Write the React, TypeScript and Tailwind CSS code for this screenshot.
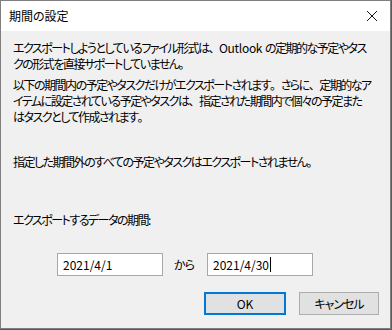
import React from 'react'

const jp = "font-['Noto_Sans_CJK_JP','Noto_Sans',sans-serif] [font-feature-settings:'palt']"

// full-width punctuation, as the Windows dialog font draws it
const P = ({ c }: { c: string }) => <span className="[font-feature-settings:normal]">{c}</span>

export default function App() {
  return (
    <div className="w-[392px] h-[330px] bg-[#5a5a5a]">
      <div className={`w-[391px] h-[329px] border border-[#7f7f7f] bg-[#f0f0f0] flex flex-col text-black text-[12px] ${jp}`}>
        <div className="h-[30px] bg-white flex items-center justify-between pl-[8px] pr-[10px] shrink-0">
          <span className="text-[12px] leading-4">期間の設定</span>
          <svg width="12" height="12" viewBox="0 0 12 12" className="mr-[2px]">
            <path d="M1 1 L11 11 M11 1 L1 11" stroke="#111" strokeWidth="1" fill="none" />
          </svg>
        </div>
        <div className="flex flex-col pl-[12px] pr-[10px] pt-[9px] leading-4 whitespace-nowrap">
          <div className="tracking-[-1.5px]">
            <p>
              エクスポートしようとしているファイル形式は<P c="、" /><span className="tracking-[-0.3px]">Outlook</span><span className="tracking-normal"> </span>の定期的な予定やタス
              <br />
              クの形式を直接サポートしていません<P c="。" />
            </p>
            <p className="mt-[5px]">
              以下の期間内の予定やタスクだけがエクスポートされます<P c="。" />さらに<P c="、" />定期的なア
              <br />
              イテムに設定されている予定やタスクは<P c="、" />指定された期間内で個々の予定また
              <br />
              はタスクとして作成されます<P c="。" />
            </p>
            <p className="mt-[29px]">指定した期間外のすべての予定やタスクはエクスポートされません<P c="。" /></p>
            <p className="mt-[42px]">エクスポートするデータの期間:</p>
          </div>
          <div className="mt-[25px] flex items-center pl-[44px]">
            <div className="w-[106px] h-[23px] bg-white border border-[#a8a8a8] flex items-center pl-[5px]">2021/4/1</div>
            <span className="ml-[11px] w-[33px] tracking-[-1px]">から</span>
            <div className="w-[106px] h-[23px] bg-white border border-[#a8a8a8] flex items-center pl-[5px]">
              2021/4/30
              <span className="inline-block w-px h-[15px] bg-black ml-[1px]" />
            </div>
          </div>
          <div className="mt-[16px] flex justify-end pr-[1px] gap-[13px]">
            <div className="w-[82px] h-[23px] bg-[#e1e1e1] border-2 border-[#0078d7] flex items-center justify-center">OK</div>
            <div className="w-[80px] h-[23px] bg-[#e1e1e1] border border-[#adadad] flex items-center justify-center tracking-[-1px]">キャンセル</div>
          </div>
        </div>
      </div>
    </div>
  )
}
